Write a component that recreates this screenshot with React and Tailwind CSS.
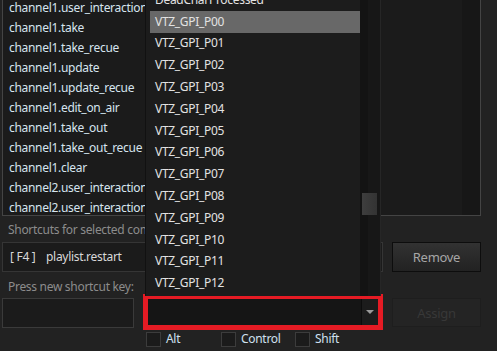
import { useState } from 'react'

const commands = [
  'channel1.user_interaction_start',
  'channel1.take',
  'channel1.take_recue',
  'channel1.update',
  'channel1.update_recue',
  'channel1.edit_on_air',
  'channel1.take_out',
  'channel1.take_out_recue',
  'channel1.clear',
  'channel2.user_interaction_start',
  'channel2.user_interaction_end',
]

const keys = ['DeadCharProcessed']
for (let i = 0; i <= 12; i++) keys.push('VTZ_GPI_P' + String(i).padStart(2, '0'))

function Checkbox({ label }) {
  return (
    <label className="flex items-center gap-[5px]">
      <span className="w-[15px] h-[15px] border border-[#3c3c3c] bg-[#1b1b1b]" />
      <span className="text-[#cfe0f0]">{label}</span>
    </label>
  )
}

function KeyDropdown() {
  return (
    <div className="absolute left-[145px] top-[-11px] w-[236px] h-[307px] bg-[#1c1c1c] border-l border-[#111] border-r border-r-[#262626] flex overflow-hidden">
      <div className="flex-1 min-w-0 pl-[4px]">
        {keys.map((k, i) => (
          <div
            key={k}
            className={
              'h-[21.8px] flex items-center pl-[5px] text-[#e2e2e2] ' +
              (i === 1 ? 'bg-[#686868]' : '')
            }
          >
            {k}
          </div>
        ))}
      </div>
      <div className="w-[20px] flex">
        <div className="w-[8px] bg-[#131313]" />
        <div className="flex-1 bg-[#171717]" />
        <div className="absolute left-[216px] top-[204px] w-[15px] h-[22px] bg-gradient-to-r from-[#3e3e3e] to-[#333]" />
      </div>
    </div>
  )
}

export default function App() {
  const [alt] = useState(false)
  return (
    <div
      className="relative w-[497px] h-[351px] bg-[#222222] overflow-hidden text-[12px] leading-[16px] tracking-[-0.3px]"
      style={{ fontFamily: '"Noto Sans", "Open Sans", sans-serif' }}
    >
      <div className="flex flex-col pl-[2px] pr-[16px]">
        {/* command list, partly hidden under the open dropdown */}
        <div className="-mt-[3px] h-[219px] border border-[#444] bg-[#1b1b1b] flex overflow-hidden">
          <div className="flex-1 min-w-0">
            {commands.map(c => (
              <div key={c} className="h-[20px] flex items-center pl-[6px] text-[#d6e4ef] whitespace-nowrap">
                {c}
              </div>
            ))}
          </div>
          <div className="w-[18px] bg-[#171717]" />
        </div>

        <div className="mt-[6px] pl-[6px] text-[#8c8c8c]">Shortcuts for selected command:</div>

        <div className="mt-[4px] flex gap-[9px]">
          <div className="flex-1 h-[30px] border border-[#353535] bg-[#1b1b1b] flex items-center pl-[7px] text-[#d8d8d8]">
            <span className="w-[36px]">[ F4 ]</span>
            <span>playlist.restart</span>
          </div>
          <button className="w-[89px] h-[30px] border border-[#0d0d0d] bg-gradient-to-b from-[#323232] to-[#222] text-[#a6a6a6] text-[13px]">
            Remove
          </button>
        </div>

        <div className="mt-[7px] pl-[6px] text-[#8c8c8c]">Press new shortcut key:</div>

        <div className="mt-[3px] flex items-start">
          <div className="w-[132px] h-[30px] border border-[#3a3a3a] bg-[#1b1b1b]" />
          <div className="relative ml-[14px] mt-[1px] w-[230px] h-[27px] bg-[#151515] flex justify-end">
            <div className="w-[17px] border-l border-[#0c0c0c] bg-[#1c1c1c] flex items-center justify-center">
              <svg width="8" height="5" viewBox="0 0 8 5">
                <path d="M0 0h8L4 4z" fill="#9a9a9a" />
              </svg>
            </div>
            <div className="absolute -left-[5px] -right-[5px] -top-[5px] -bottom-[4px] border-[5px] border-[#e51b24] pointer-events-none" />
          </div>
          <button disabled className="ml-[14px] w-[89px] h-[29px] border border-[#1e1e1e] bg-[#242424] text-[#383838] text-[13px]">
            Assign
          </button>
        </div>

        <div className="mt-[3px] ml-[144px] flex text-[12px]">
          <div className="w-[75px]"><Checkbox label="Alt" /></div>
          <div className="w-[74px]"><Checkbox label="Control" /></div>
          <Checkbox label="Shift" />
        </div>
      </div>

      <KeyDropdown />
      {alt && null}
    </div>
  )
}
